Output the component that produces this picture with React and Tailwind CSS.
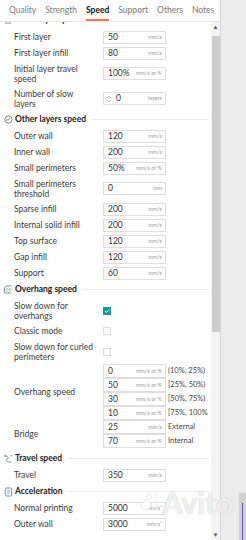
import React from 'react'

const font = { fontFamily: 'Lato, "Noto Sans", "Liberation Sans", sans-serif' }

const tabs = ['Quality', 'Strength', 'Speed', 'Support', 'Others', 'Notes']

const Input = ({ value, unit, spin, h = 'h-[13px]' }) => (
  <div className={`relative flex items-center w-[63px] ${h} border border-[#dedede] bg-white shrink-0`}>
    {spin && (
      <svg width="6" height="10" viewBox="0 0 6 10" className="ml-[2px]">
        <path d="M1 4 L3 2 L5 4" fill="none" stroke="#aaa" strokeWidth="0.8" />
        <path d="M1 6 L3 8 L5 6" fill="none" stroke="#aaa" strokeWidth="0.8" />
      </svg>
    )}
    <span className="ml-[4px] text-[8.5px] text-[#333]">{value}</span>
    <span className="ml-auto mr-[3px] text-[5.5px] text-[#999]">{unit}</span>
  </div>
)

// label text may be an array of lines, the picture wraps them at fixed points
const Label = ({ children }) => (
  <div className="w-[103px] pl-[14px] pr-[4px] text-[8.5px] leading-[10px] text-[#3a3a3a]">
    {Array.isArray(children)
      ? children.map((l, i) => (
          <div key={i} className="whitespace-nowrap">
            {l}
          </div>
        ))
      : children}
  </div>
)

const Row = ({ label, value, unit, spin }) => (
  <div className={`flex items-center ${Array.isArray(label) ? 'h-[25px]' : 'h-[16px]'}`}>
    <Label>{label}</Label>
    <Input value={value} unit={unit} spin={spin} />
  </div>
)

const Check = ({ label, checked }) => (
  <div className={`flex items-center ${Array.isArray(label) ? 'h-[25px]' : 'h-[16px]'}`}>
    <Label>{label}</Label>
    {checked ? (
      <div className="w-[8px] h-[8px] bg-[#159a8c] flex items-center justify-center">
        <svg width="6" height="6" viewBox="0 0 6 6">
          <path d="M0.8 3 L2.4 4.5 L5.2 1.5" fill="none" stroke="white" strokeWidth="0.9" />
        </svg>
      </div>
    ) : (
      <div className="w-[8px] h-[8px] border border-[#dcdcdc] bg-white" />
    )}
  </div>
)

const icons = {
  gauge: (
    <svg width="9" height="9" viewBox="0 0 10 10">
      <circle cx="5" cy="5" r="4" fill="none" stroke="#666" strokeWidth="0.9" />
      <path d="M2.5 5.5 L5 5.5 L6.5 3.5" fill="none" stroke="#666" strokeWidth="0.9" />
    </svg>
  ),
  overhang: (
    <svg width="10" height="9" viewBox="0 0 10 10">
      <path d="M1 9 L1 3 L3 1 L9 1" fill="none" stroke="#5a7a8a" strokeWidth="0.9" />
      <path d="M3 8 L8 3 M5 9 L9 5 M2 6 L5 3" fill="none" stroke="#5a7a8a" strokeWidth="0.7" />
      <path d="M1 9 L9 9" stroke="#5a7a8a" strokeWidth="0.7" />
    </svg>
  ),
  travel: (
    <svg width="10" height="9" viewBox="0 0 10 10">
      <path d="M1 2 C6 2 6 5 4 6 C2 7 3 9 9 9" fill="none" stroke="#5a7a8a" strokeWidth="0.9" />
      <path d="M1 1 L2.5 2 L1 3" fill="none" stroke="#5a7a8a" strokeWidth="0.7" />
      <circle cx="8.5" cy="2" r="0.9" fill="#5a7a8a" />
    </svg>
  ),
  accel: (
    <svg width="9" height="10" viewBox="0 0 10 11">
      <rect x="1.5" y="1" width="7" height="9" rx="1.5" fill="none" stroke="#5a7a8a" strokeWidth="0.9" />
      <path d="M3.5 3.5 L6.5 3.5 M3.5 5.5 L6.5 5.5 M3.5 7.5 L5.5 7.5" stroke="#5a7a8a" strokeWidth="0.7" />
    </svg>
  ),
  line: (
    <svg width="9" height="9" viewBox="0 0 10 10">
      <path d="M1 9 L8 9" stroke="#888" strokeWidth="1" />
    </svg>
  ),
}

const Header = ({ title, icon, mt = '' }) => (
  <div className={`flex items-center h-[17px] pl-[3px] ${mt}`}>
    <span className="w-[10px] flex items-center justify-center">{icons[icon]}</span>
    <span className="ml-[2px] text-[8.5px] font-bold text-[#222] whitespace-nowrap">{title}</span>
    <div className="flex-1 ml-[5px] mr-[2px] border-t border-[#ececec]" />
  </div>
)

const Stacked = ({ label, items }) => (
  <div className="flex items-center">
    <Label>{label}</Label>
    <div className="flex flex-col">
      {items.map((it, i) => (
        <div key={i} className="flex items-center h-[14px]">
          <Input value={it.v} unit={it.u} h="h-[14px]" />
          <span className="ml-[2px] text-[7.5px] text-[#444] whitespace-nowrap">{it.r}</span>
        </div>
      ))}
    </div>
  </div>
)

export default function App() {
  return (
    <div className="relative w-[246px] h-[540px] flex bg-[#ececec] overflow-hidden" style={font}>
      <div className="w-[221px] h-full bg-white border-r border-[#d6d6d6] flex flex-col">
        <div className="h-[22px] shrink-0 flex items-end gap-[9px] pl-[9px] border-b border-[#e4e4e4] bg-white">
          {tabs.map((t) => (
            <div
              key={t}
              className={`pb-[3px] text-[8.5px] leading-[12px] whitespace-nowrap border-b-2 ${
                t === 'Speed' ? 'font-bold text-[#111] border-[#e8795a]' : 'text-[#7a7a7a] border-transparent'
              }`}
            >
              {t}
            </div>
          ))}
        </div>

        <div className="flex-1 flex min-h-0">
          <div className="w-[211px] overflow-hidden">
            {/* scrolled: only the bottom of the first section header shows */}
            <div className="h-[7px] overflow-hidden">
              <div className="-mt-[11px]">
                <Header title="Initial layer speed" icon="line" />
              </div>
            </div>
            <Row label="First layer" value="50" unit="mm/s" />
            <Row label="First layer infill" value="80" unit="mm/s" />
            <Row label={['Initial layer travel', 'speed']} value="100%" unit="mm/s or %" />
            <Row label={['Number of slow', 'layers']} value="0" unit="layers" spin />

            <Header title="Other layers speed" icon="gauge" />
            <Row label="Outer wall" value="120" unit="mm/s" />
            <Row label="Inner wall" value="200" unit="mm/s" />
            <Row label="Small perimeters" value="50%" unit="mm/s or %" />
            <Row label={['Small perimeters', 'threshold']} value="0" unit="mm" />
            <Row label="Sparse infill" value="200" unit="mm/s" />
            <Row label="Internal solid infill" value="200" unit="mm/s" />
            <Row label="Top surface" value="120" unit="mm/s" />
            <Row label="Gap infill" value="120" unit="mm/s" />
            <Row label="Support" value="60" unit="mm/s" />

            <Header title="Overhang speed" icon="overhang" />
            <Check label={['Slow down for', 'overhangs']} checked />
            <Check label="Classic mode" />
            <Check label={['Slow down for curled', 'perimeters']} />
            <Stacked
              label="Overhang speed"
              items={[
                { v: '0', u: 'mm/s or %', r: '(10%, 25%)' },
                { v: '50', u: 'mm/s or %', r: '[25%, 50%)' },
                { v: '30', u: 'mm/s or %', r: '[50%, 75%)' },
                { v: '10', u: 'mm/s or %', r: '[75%, 100%' },
              ]}
            />
            <Stacked
              label="Bridge"
              items={[
                { v: '25', u: 'mm/s', r: 'External' },
                { v: '70', u: 'mm/s or %', r: 'Internal' },
              ]}
            />

            <Header title="Travel speed" icon="travel" mt="mt-[2px]" />
            <Row label="Travel" value="350" unit="mm/s" />

            <Header title="Acceleration" icon="accel" />
            <Row label="Normal printing" value="5000" unit="mm/s²" />
            <Row label="Outer wall" value="3000" unit="mm/s²" />
          </div>

          <div className="w-[9px] flex flex-col items-center bg-[#f4f4f4]">
            <span className="text-[6px] leading-[10px] text-[#555]">▲</span>
            <div className="w-[8px] h-[296px] bg-[#cdcdcd] mt-[4px]" />
            <div className="flex-1" />
            <span className="text-[6px] leading-[10px] text-[#555]">▼</span>
          </div>
        </div>
      </div>

      <div className="flex-1 flex flex-col">
        <div className="flex-1" />
        <div className="ml-[18px] h-[47px] bg-[#d2d2d2] flex justify-center">
          <div className="w-px bg-[#6b4fc8] mt-[10px]" />
        </div>
      </div>

      {/* watermark */}
      <div className="absolute left-[140px] top-[486px] flex items-center gap-[2px] pointer-events-none">
        <svg width="20" height="20" viewBox="0 0 20 20">
          <circle cx="6" cy="13" r="5" fill="white" fillOpacity="0.75" stroke="#bbb" strokeOpacity="0.5" strokeWidth="0.6" />
          <circle cx="14" cy="13" r="3" fill="white" fillOpacity="0.75" stroke="#bbb" strokeOpacity="0.5" strokeWidth="0.6" />
          <circle cx="9" cy="5" r="2.5" fill="white" fillOpacity="0.75" stroke="#bbb" strokeOpacity="0.5" strokeWidth="0.6" />
          <circle cx="15" cy="5" r="1.6" fill="white" fillOpacity="0.75" stroke="#bbb" strokeOpacity="0.5" strokeWidth="0.6" />
        </svg>
        <span className="text-[30px] leading-[32px] font-bold text-white/80 [text-shadow:0_0_1px_rgba(0,0,0,0.3)]">Avito</span>
      </div>
    </div>
  )
}
